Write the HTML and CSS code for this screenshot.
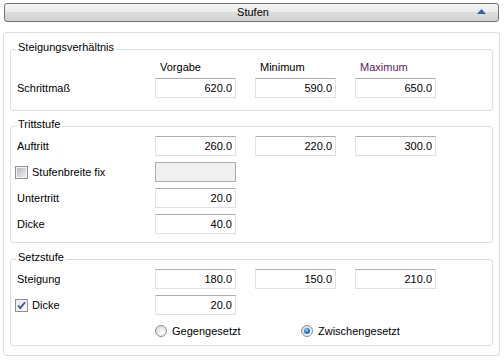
FILE: index.html
```html
<!DOCTYPE html>
<html lang="de">

<head>
  <meta charset="UTF-8">
  <meta name="viewport" content="width=device-width, initial-scale=1.0">
  <title>Stufen</title>
  <link rel="stylesheet" href="styles.css">
</head>

<body>

  <!-- Expander header -->
  <div class="expander">
    <span></span>
    <span class="expander-title">Stufen</span>
    <svg class="expander-arrow" width="9" height="5" viewBox="0 0 9 5">
      <polygon points="4.5,0 9,5 0,5" fill="#2f64a0" />
    </svg>
  </div>

  <div class="panel">

    <!-- Steigungsverhaeltnis -->
    <fieldset class="group group-ratio">
      <legend>Steigungsverhältnis</legend>
      <div class="rows">
        <div class="row row-head">
          <span class="label"></span>
          <span class="col-head">Vorgabe</span>
          <span class="col-head">Minimum</span>
          <span class="col-head col-max">Maximum</span>
        </div>
        <div class="row">
          <span class="label">Schrittmaß</span>
          <input class="num" type="text" value="620.0">
          <input class="num" type="text" value="590.0">
          <input class="num" type="text" value="650.0">
        </div>
      </div>
    </fieldset>

    <!-- Trittstufe -->
    <fieldset class="group group-tread">
      <legend>Trittstufe</legend>
      <div class="rows">
        <div class="row">
          <span class="label">Auftritt</span>
          <input class="num" type="text" value="260.0">
          <input class="num" type="text" value="220.0">
          <input class="num" type="text" value="300.0">
        </div>
        <div class="row">
          <label class="label check-label"><span class="check"></span>Stufenbreite fix</label>
          <input class="num" type="text" value="" disabled>
        </div>
        <div class="row">
          <span class="label">Untertritt</span>
          <input class="num" type="text" value="20.0">
        </div>
        <div class="row">
          <span class="label">Dicke</span>
          <input class="num" type="text" value="40.0">
        </div>
      </div>
    </fieldset>

    <!-- Setzstufe -->
    <fieldset class="group group-riser">
      <legend>Setzstufe</legend>
      <div class="rows">
        <div class="row">
          <span class="label">Steigung</span>
          <input class="num" type="text" value="180.0">
          <input class="num" type="text" value="150.0">
          <input class="num" type="text" value="210.0">
        </div>
        <div class="row">
          <label class="label check-label">
            <span class="check checked">
              <svg width="9" height="9" viewBox="0 0 9 9">
                <path d="M1 4.5 L3.3 7 L8 1.2" fill="none" stroke="#3b4f92" stroke-width="1.8" />
              </svg>
            </span>Dicke</label>
          <input class="num" type="text" value="20.0">
        </div>
        <div class="row row-radio">
          <label class="option option-first"><span class="radio"></span>Gegengesetzt</label>
          <label class="option"><span class="radio checked"></span>Zwischengesetzt</label>
        </div>
      </div>
    </fieldset>

  </div>

</body>

</html>
```

FILE: styles.css
```css
body {
  margin: 0;
  background: #fff;
  font-family: "Liberation Sans", Arial, sans-serif;
  font-size: 11px;
  color: #000;
}

/* Expander header */
.expander {
  box-sizing: border-box;
  height: 19px;
  margin: 3px 5px 0 4px;
  border: 1px solid #707070;
  border-radius: 3px;
  background: linear-gradient(#f3f3f3 0%, #ebebeb 50%, #dddddd 50%, #d0d0d0 100%);
  display: grid;
  grid-template-columns: 1fr auto 1fr;
  align-items: center;
}

.expander-title {
  line-height: 13px;
  padding-left: 3px;
}

.expander-arrow {
  justify-self: end;
  margin-right: 12px;
  margin-top: -2px;
}

/* Outer panel */
.panel {
  margin: 10px 4px 0 3px;
  border: 1px solid #d5dfe5;
  border-radius: 3px;
  padding-bottom: 9px;
}

/* Group boxes */
.group {
  margin: 8px 6px 0 6px;
  min-width: 0;
  border: 1px solid #d5dfe5;
  border-radius: 3px;
  padding: 2px 6px 8px 6px;
}

.group legend {
  margin-left: -1px;
  padding: 0 2px 3px 2px;
  line-height: 13px;
}

.group-ratio {
  padding-top: 3px;
  padding-bottom: 12px;
}

.group-tread {
  margin-top: 7px;
}

.group-riser {
  padding-bottom: 4px;
}

.rows {
  display: grid;
  gap: 6px;
}

.row {
  display: flex;
  align-items: center;
  gap: 19px;
  height: 20px;
}

.row-head {
  height: 13px;
  margin-bottom: -1px;
}

.label {
  width: 119px;
  flex: none;
  white-space: nowrap;
}

.col-head {
  width: 76px;
  padding-left: 5px;
  flex: none;
}

.col-max {
  color: #5b235b;
}

/* Text boxes */
.num {
  box-sizing: border-box;
  width: 81px;
  height: 20px;
  margin: 0;
  padding: 0 3px;
  border: 1px solid #dde1e6;
  border-top-color: #abadb3;
  border-left-color: #e2e3ea;
  border-radius: 0;
  background: #fff;
  font-family: inherit;
  font-size: 11px;
  color: #000;
  text-align: right;
  outline: none;
  flex: none;
}

.num:disabled {
  background: #f0f0f0;
  border-color: #afafaf;
}

/* Check boxes */
.check-label {
  display: flex;
  align-items: center;
  gap: 4px;
  margin-left: -2px;
  width: 121px;
}

.check {
  box-sizing: border-box;
  width: 13px;
  height: 13px;
  padding: 1px;
  border: 1px solid #8e8f8f;
  background: linear-gradient(135deg, #b6bbc1, #ededed) content-box, #f4f4f4;
  flex: none;
}

.check.checked {
  background: linear-gradient(135deg, #e4e6ea, #fbfbfb) content-box, #f4f4f4;
  padding: 1px 0 0 1px;
}

.check svg {
  display: block;
}

/* Radio buttons */
.row-radio {
  gap: 0;
  padding-left: 138px;
}

.option {
  display: flex;
  align-items: center;
  gap: 5px;
}

.option-first {
  width: 146px;
}

.radio {
  box-sizing: border-box;
  width: 12px;
  height: 12px;
  border: 1px solid #8e8f8f;
  border-radius: 50%;
  background: radial-gradient(circle at 65% 65%, #fdfdfd 0%, #e6e6e6 55%, #cfcfcf 100%);
  display: flex;
  align-items: center;
  justify-content: center;
  flex: none;
}

.radio.checked::after {
  content: "";
  width: 6px;
  height: 6px;
  border-radius: 50%;
  background: radial-gradient(circle at 40% 35%, #8fdcff 0%, #1f86d6 45%, #0b3e78 100%);
}
```
